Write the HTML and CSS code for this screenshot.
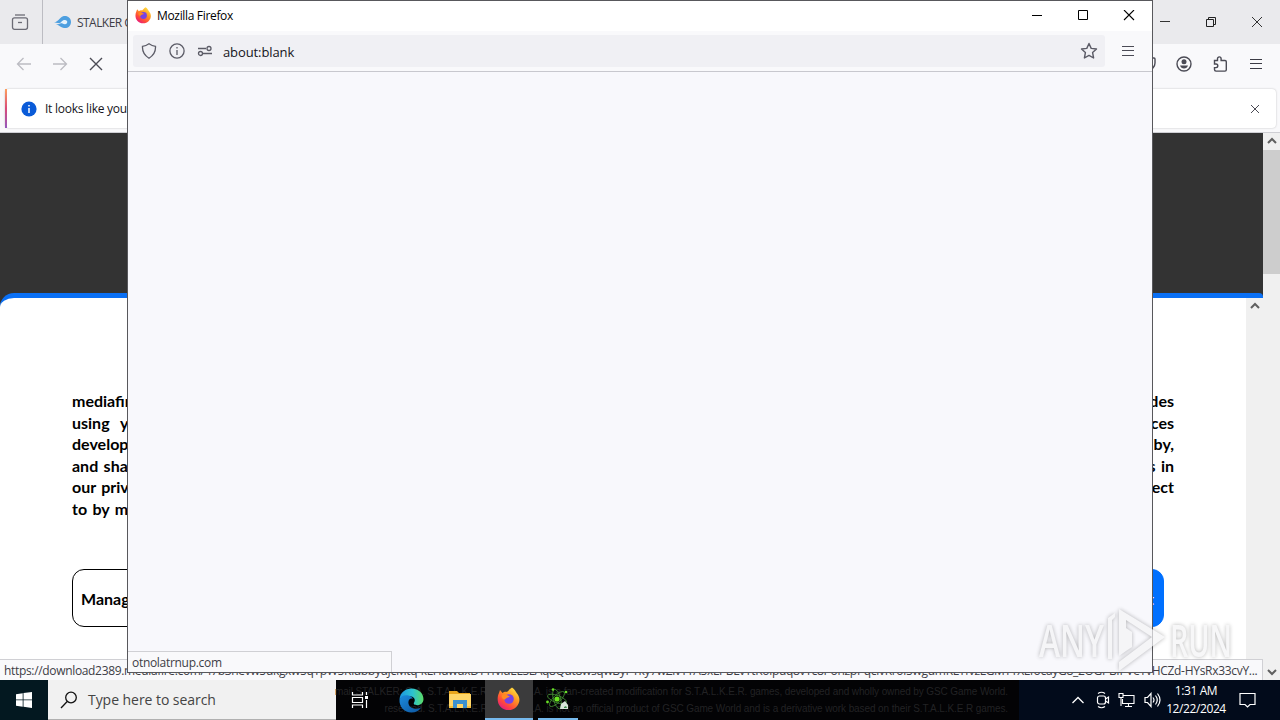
FILE: index.html
```html
<!DOCTYPE html>
<html lang="en">
<head>
    <meta charset="UTF-8">
    <title>Desktop</title>
    <link rel="stylesheet" href="styles.css">
</head>
<body>
    <div class="desktop">
        <div class="browser">
            <div class="tabstrip">
                <div class="view-btn">
                    <svg width="18" height="18" viewBox="0 0 18 18" fill="none" stroke="#6b6b75" stroke-width="1.3"><path d="M4 2h10"/><rect x="1.5" y="4.8" width="15" height="11.5" rx="2"/><path d="M7 9.500h4"/></svg>
                </div>
                <div class="tab">
                    <svg width="18" height="14" viewBox="0 0 18 14"><path d="M0 7.5C4 7 5 3 9 1.2 13 0 17 2.5 17 7s-4 7-8 5.8C6 12 5 10 2 9.5L8 8.5z" fill="#4d9fe0"/><path d="M6 7.5C8 7 8 5 11 5c3 0 3 4 0 4.2C9 9.2 8 8 6 7.5z" fill="#e4f2fc"/></svg>
                    <span class="tab-title">STALKER G</span>
                </div>
                <div class="win-controls">
                    <svg width="12" height="12" viewBox="0 0 12 12" stroke="#333"><path d="M1 5.5h10"/></svg>
                    <svg width="12" height="12" viewBox="0 0 12 12" stroke="#222" fill="none"><path d="M3.5 3V1.5h7v7H9M1.5 3.5h7v7h-7z"/></svg>
                    <svg width="12" height="12" viewBox="0 0 12 12" stroke="#333" fill="none"><path d="M1 1l10 10M11 1L1 11"/></svg>
                </div>
            </div>
            <div class="toolbar">
                <div class="nav-btns">
                    <svg width="16" height="16" viewBox="0 0 16 16" fill="none" stroke="#bcbcc2" stroke-width="1.3"><path d="M15 8H1.5M7.500 2l-6 6 6 6"/></svg>
                    <svg width="16" height="16" viewBox="0 0 16 16" fill="none" stroke="#bcbcc2" stroke-width="1.3"><path d="M1 8h13.5M8.500 2l6 6-6 6"/></svg>
                    <svg width="16" height="16" viewBox="0 0 16 16" fill="none" stroke="#4b4b55" stroke-width="1.4"><path d="M2 2l12 12M14 2L2 14"/></svg>
                </div>
                <div class="tool-btns">
                    <svg width="16" height="16" viewBox="0 0 16 16" fill="none" stroke="#4b4b55" stroke-width="1.4"><path d="M1 3q0-1 1-1h12q1 0 1 1v4a7 7 0 0 1-14 0z"/></svg>
                    <svg width="16" height="16" viewBox="0 0 16 16" fill="none" stroke="#4b4b55" stroke-width="1.4"><circle cx="8" cy="8" r="7"/><circle cx="8" cy="5.8" r="2.5" fill="#4b4b55" stroke="none"/><path d="M4 9.500h8q-1 3-4 3t-4-3z" fill="#4b4b55" stroke="none"/></svg>
                    <svg width="16" height="16" viewBox="0 0 16 16" fill="none" stroke="#4b4b55" stroke-width="1.4"><path d="M2.500 4.500h3V2.700a1.800 1.800 0 0 1 3.600 0v1.800H13q1.300 0 1.300 1.300v8q0 1.300-1.300 1.300H4q-1.500 0-1.500-1.500v-2H4a1.800 1.800 0 0 0 0-3.600H2.500z"/></svg>
                    <svg width="16" height="16" viewBox="0 0 16 16" stroke="#3b3b45" stroke-width="1.2"><path d="M2 3.500h12M2 7.500h12M2 12.500h12"/></svg>
                </div>
            </div>
            <div class="infobar-wrap">
                <div class="infobar">
                    <svg class="info-icon" width="16" height="16" viewBox="0 0 16 16"><circle cx="8" cy="8" r="7.6" fill="#0a5bd8"/><path d="M8 7v5M8 4v1.500" stroke="#fff" stroke-width="1.5"/></svg>
                    <span class="infobar-text">It looks like you</span>
                    <svg class="close" width="10" height="10" viewBox="0 0 10 10" stroke="#4b4b55"><path d="M1 1l8 8M9 1L1 9"/></svg>
                </div>
            </div>
            <div class="viewport">
                <div class="page">
                    <div class="dialog">
                        <div class="dialog-body">
                            <div class="copy">
                                <p><span>mediafire</span><span>des</span></p>
                                <p class="loose"><span>using you</span><span>ces</span></p>
                                <p><span>develop</span><span>by,</span></p>
                                <p><span>and shar</span><span>s in</span></p>
                                <p><span>our priva</span><span>ect</span></p>
                                <p><span>to by ma</span></p>
                            </div>
                            <div class="buttons">
                                <div class="btn">Manage</div>
                                <div class="btn primary">t</div>
                            </div>
                        </div>
                        <div class="scrollbar inner">
                            <svg width="10" height="7" viewBox="0 0 10 7" fill="none" stroke="#606060" stroke-width="2"><path d="M1 6l4-4 4 4"/></svg>
                        </div>
                    </div>
                </div>
                <div class="scrollbar">
                    <svg width="10" height="7" viewBox="0 0 10 7" fill="none" stroke="#606060" stroke-width="2"><path d="M1 6l4-4 4 4"/></svg>
                    <div class="thumb"></div>
                    <svg width="10" height="7" viewBox="0 0 10 7" fill="none" stroke="#606060" stroke-width="2"><path d="M1 1l4 4 4-4"/></svg>
                </div>
            </div>
            <div class="status">
                <span class="status-start">https://download2389.mediafire.com/47b3hevw5ukgxw5qTpW5KlubbyuJcMtq-kLHdwuxDTTfvidELSLAq8Qdt8wsqwByPTky7wZivTTA5xLP</span>
                <span class="status-end">BLvTtKolpuq8vTc8PonzpPqcivKroi5wgdmKLTfvzLGMTTXLfocayG8_2OGPBIPVeYvHCZd-HYsRx33cvY...</span>
            </div>
        </div>

        <div class="popup">
            <div class="titlebar">
                <svg width="17" height="17" viewBox="0 0 24 24"><use href="#firefox"/></svg>
                <span class="title">Mozilla Firefox</span>
                <div class="popup-controls">
                    <svg width="12" height="12" viewBox="0 0 12 12" stroke="#000"><path d="M1 5.5h10"/></svg>
                    <svg width="12" height="12" viewBox="0 0 12 12" stroke="#000" fill="none"><path d="M1.500 .5h9v9h-9z"/></svg>
                    <svg width="12" height="12" viewBox="0 0 12 12" stroke="#000" stroke-width="1.1"><path d="M1 0l10 10M11 0L1 10"/></svg>
                </div>
            </div>
            <div class="addressbar">
                <div class="urlbar">
                    <svg width="16" height="16" viewBox="0 0 16 16" fill="none" stroke="#5b5b66" stroke-width="1.3"><path d="M8 .8q3 2.200 6.500 2.500Q15 11 8 15.200 1 11 1.500 3.300 5 3 8 .8z"/></svg>
                    <svg width="16" height="16" viewBox="0 0 16 16" fill="none" stroke="#5b5b66" stroke-width="1.3"><circle cx="8" cy="8" r="7.1"/><path d="M8 7v5M8 4v1.500"/></svg>
                    <svg width="16" height="16" viewBox="0 0 16 16" fill="none" stroke="#5b5b66" stroke-width="1.3"><path d="M1 5.500h8M6 10.500h9"/><circle cx="12" cy="5.5" r="2"/><circle cx="3.5" cy="10.5" r="2"/></svg>
                    <span class="url">about:blank</span>
                    <svg class="star" width="18" height="18" viewBox="0 0 18 18" fill="none" stroke="#5b5b66" stroke-width="1.4" stroke-linejoin="round"><path d="M9 1.500l2.200 4.900 5.300.6-3.900 3.600 1 5.400L9 13.400 4.400 16l1-5.400L1.500 7l5.300-.6z"/></svg>
                </div>
                <svg class="menu" width="16" height="16" viewBox="0 0 16 16" stroke="#4b4b55" stroke-width="1.2"><path d="M2 3.500h12M2 7.500h12M2 12.500h12"/></svg>
            </div>
            <div class="blank"></div>
            <div class="popup-status"><span>otnolatrnup.com</span></div>
        </div>

        <div class="taskbar">
            <div class="start">
                <svg width="16" height="16" viewBox="0 0 16 16" fill="#fff"><path d="M0 2.200L6.700 1.200v6.300H0zM7.500 1.100L16 0v7.500H7.500zM0 8.300h6.700v6.400L0 13.700zM7.500 8.300H16V16l-8.500-1.200z"/></svg>
            </div>
            <div class="search">
                <svg width="18" height="18" viewBox="0 0 18 18" fill="none" stroke="#111" stroke-width="1.3"><circle cx="11" cy="6.5" r="5.3"/><path d="M7.200 10.500L1 17"/></svg>
                <span>Type here to search</span>
            </div>
            <div class="apps">
                <div class="ghost">
                    <p>mail STALKER: G.A. S.T.A.L.K.E.R. G.A.M.M.A. is a fan-created modification for S.T.A.L.K.E.R. games, developed and wholly owned by GSC Game World.</p>
                    <p>reserved. S.T.A.L.K.E.R. G.A.M.M.A. is not an official product of GSC Game World and is a derivative work based on their S.T.A.L.K.E.R games.</p>
                </div>
                <div class="app">
                    <svg width="18" height="18" viewBox="0 0 18 18" fill="none" stroke="#fff" stroke-width="1.2"><path d="M1.500 1v3h10V1M1.500 6.500h10v5h-10zM1.500 17v-3h10v3M15.500 1v3M15.500 9v8"/><path d="M14 5h3v3h-3z" fill="#fff" stroke="none"/></svg>
                </div>
                <div class="app wide">
                    <svg width="25" height="25" viewBox="0 0 24 24">
                        <defs>
                            <linearGradient id="edgeTop" x1="0" x2="1"><stop offset="0" stop-color="#1b95e0"/><stop offset=".55" stop-color="#2dc3cf"/><stop offset="1" stop-color="#5bdc66"/></linearGradient>
                            <linearGradient id="edgeBottom" x2="1" y2="1"><stop offset="0" stop-color="#1b8bdd"/><stop offset="1" stop-color="#0d559f"/></linearGradient>
                        </defs>
                        <path d="M.5 11C1 4.500 6 .5 12 .5c7 0 11.500 5 11.500 10 0 4-3 6-6 6-2.500 0-4-1-3-2.500 2-3-.5-6-4-6-4 0-9 1-10 3z" fill="url(#edgeTop)"/>
                        <path d="M.5 11c1-3 4-4.500 7.500-4 3 .5 5 2 5.500 3.500-2-1-4.500 0-4.500 3.500 0 4 4 6.500 8 6 2-.2 3.500-1 4.500-1.500-2 3.500-5.500 5-9.500 5C5 23.500 0 18 .5 11z" fill="url(#edgeBottom)"/>
                    </svg>
                </div>
                <div class="app folder">
                    <svg width="22" height="20" viewBox="0 0 22 20"><path d="M0 1h8l2 2h11v15H0z" fill="#e9a51b"/><path d="M0 4h22v14H0z" fill="#ffd567"/><path d="M4 18v-8h14v8h-4v-4H8v4z" fill="#3c91cf"/><path d="M0 16h4v2H0zM18 16h4v2h-4z" fill="#f5be3a"/></svg>
                </div>
                <div class="app active">
                    <svg width="24" height="24" viewBox="0 0 24 24">
                        <defs>
                            <linearGradient id="fox" x1=".9" y1="0" x2=".2" y2="1"><stop offset="0" stop-color="#fff14a"/><stop offset=".4" stop-color="#ff9822"/><stop offset=".72" stop-color="#ff4a3a"/><stop offset="1" stop-color="#e31587"/></linearGradient>
                        </defs>
                        <g id="firefox">
                            <path d="M15 .5c3 2 3.500 4 5 6 4 5 2.500 10-.5 13.200-4 4.500-12 4.500-16 0C0 16 0 10 2 6l1-3 2.500 3C7 4.500 9 4.500 10 5c1.500-1 2.500-3 5-4.500z" fill="url(#fox)"/>
                            <circle cx="12" cy="12" r="4.8" fill="#7542e5"/>
                            <path d="M5 8c3-1 6 0 8 2-2 0-4 1-5 2.500-2 0-4-2-3-4.500z" fill="#ff8a22"/>
                        </g>
                    </svg>
                </div>
                <div class="app running">
                    <svg width="26" height="24" viewBox="0 0 26 24" fill="none" stroke="#3f8430" stroke-width=".9"><ellipse cx="12" cy="12" rx="10" ry="3.6" transform="rotate(20 12 12)"/><ellipse cx="12" cy="12" rx="10" ry="3.6" transform="rotate(75 12 12)"/><ellipse cx="12" cy="12" rx="10" ry="3.6" transform="rotate(135 12 12)"/><circle cx="12" cy="12" r="2.6" fill="#6ae51f" stroke="none"/><g fill="#69df26" stroke="none"><circle cx="8" cy="2.5" r="1.3"/><circle cx="21" cy="5" r="1.3"/><circle cx="2.5" cy="15" r="1.4"/></g><path d="M15 22l1-5 4-3 3 4v4z" fill="#d9e6da" stroke="none"/><path d="M19 20l2-1 1 2h-3z" fill="#3e8a4d" stroke="none"/></svg>
                </div>
            </div>
            <div class="tray">
                <svg width="12" height="8" viewBox="0 0 12 8" fill="none" stroke="#fff" stroke-width="1.3"><path d="M.5 7L6 1.500 11.500 7"/></svg>
                <svg class="meet" width="14" height="18" viewBox="0 0 14 18" fill="none" stroke="#fff" stroke-width="1.2"><rect x="1.5" y="5" width="8" height="8" rx="2"/><path d="M9.500 8l3-2v6l-3-2M2 2.500q3.500-2.500 7 0M2 15.500q3.500 2.500 7 0"/></svg>
                <svg width="17" height="16" viewBox="0 0 17 16" fill="none" stroke="#fff" stroke-width="1.1"><path d="M5 3.500h11v8H4.500V7M1 1.500h4v4H1zM3 5.500V14M7 14.500h7M10.500 11.500v3"/></svg>
                <svg width="17" height="16" viewBox="0 0 17 16" fill="none" stroke="#fff" stroke-width="1.2"><path d="M1 5.500h2.500l3.500-4v13l-3.500-4H1zM9 5.500q2 2.500 0 5M11.500 3.500q3.500 4.500 0 9M13.500 1.500q5 6.500 0 13"/></svg>
                <div class="clock"><span>1:31 AM</span><span>12/22/2024</span></div>
                <svg class="action" width="17" height="17" viewBox="0 0 17 17" fill="none" stroke="#fff" stroke-width="1.2"><path d="M1 1.500h15v11h-5L8.500 15 6 12.500H1z"/></svg>
            </div>
        </div>

        <svg class="watermark" width="206" height="74" viewBox="0 0 206 74">
            <g class="mark-text">
                <text x="5" y="55" textLength="65" lengthAdjust="spacingAndGlyphs">ANY</text>
                <text x="136" y="55" textLength="62" lengthAdjust="spacingAndGlyphs">RUN</text>
            </g>
            <g class="mark-play">
                <path d="M85 7L131 35 85 69v-9l33-25-26-17v31l-7 5z"/>
                <path d="M98 45l-6 4V26l6 4z"/>
                <path d="M74 57V16l7-5v4l-3 3v39z"/>
            </g>
        </svg>
    </div>
</body>
</html>
```

FILE: styles.css
```css
* {
    box-sizing: border-box;
}
body {
    margin: 0;
    font-family: "Open Sans", "Noto Sans", sans-serif;
    font-size: 12px;
    color: #15141a;
}
p {
    margin: 0;
}
svg {
    flex-shrink: 0;
}
.desktop {
    position: relative;
    width: 1280px;
    height: 720px;
    overflow: hidden;
    display: flex;
    flex-direction: column;
}

/* main browser window */
.browser {
    position: relative;
    height: 680px;
    display: flex;
    flex-direction: column;
    background: #f9f9fb;
}
.tabstrip {
    height: 44px;
    display: flex;
    align-items: center;
    background: #eaeaed;
}
.view-btn {
    width: 43px;
    height: 44px;
    padding: 13px 0 0 11px;
    border-right: 1px solid #bcbcc2;
}
.tab {
    display: flex;
    align-items: center;
    gap: 5px;
    padding-left: 11px;
}
.tab-title {
    color: #3d3d46;
    letter-spacing: -0.55px;
    white-space: nowrap;
}
.win-controls {
    margin-left: auto;
    display: flex;
    gap: 34px;
    padding-right: 17px;
}
.toolbar {
    height: 41px;
    display: flex;
    align-items: center;
    justify-content: space-between;
    padding: 0 16px 1px;
}
.nav-btns,
.tool-btns {
    display: flex;
    gap: 20px;
}
.infobar-wrap {
    height: 48px;
    padding: 4px 4px 4px 5px;
    border-bottom: 1px solid #cfcfd4;
}
.infobar {
    height: 39px;
    display: flex;
    align-items: center;
    background: #fff;
    border-radius: 4px;
    border-left: 2px solid;
    border-image: linear-gradient(#ffa45c, #d94a79, #9059c0) 1;
    box-shadow: 0 0 2px rgba(0, 0, 0, 0.25);
    padding: 0 16px 0 14px;
}
.infobar-text {
    margin-left: 8px;
    letter-spacing: -0.25px;
}
.close {
    margin-left: auto;
}
.viewport {
    flex: 1;
    display: flex;
    background: #333;
}
.page {
    flex: 1;
    padding-top: 160px;
}
.dialog {
    height: 387px;
    display: flex;
    background: #fff;
    border-top: 5px solid #0a70f5;
    border-radius: 14px 4px 0 0;
}
.dialog-body {
    flex: 1;
    padding: 92px 0 0 72px;
}
.copy {
    width: 1102px;
    font-family: Lato, sans-serif;
    font-weight: 700;
    font-size: 16px;
    line-height: 21.6px;
    color: #000;
}
.copy p {
    display: flex;
    justify-content: space-between;
    word-spacing: 1.5px;
}
.copy .loose {
    word-spacing: 7px;
}
.buttons {
    width: 1092px;
    margin-top: 49px;
    display: flex;
    justify-content: space-between;
}
.btn {
    width: 520px;
    height: 58px;
    padding-left: 8px;
    border: 1px solid #000;
    border-radius: 12px;
    font: 700 16px/58px Lato, sans-serif;
    color: #000;
}
.btn.primary {
    background: #0070ff;
    border-color: #0070ff;
    color: #fff;
    padding-right: 9px;
    text-align: right;
}
.scrollbar {
    width: 17px;
    background: #f0f0f0;
    display: flex;
    flex-direction: column;
    align-items: center;
    padding: 4px 0 4px;
}
.scrollbar.inner {
    width: 17px;
}
.thumb {
    width: 17px;
    height: 124px;
    margin: 6px 0 auto;
    background: #cdcdcd;
}
.status {
    position: absolute;
    left: 0;
    bottom: 0;
    width: 1263px;
    height: 21px;
    padding: 0 5px 0 4px;
    display: flex;
    justify-content: space-between;
    background: #f9f9fb;
    border: 1px solid #d0d0d4;
    border-width: 1px 1px 0 0;
    line-height: 22px;
    color: #3d3d46;
    white-space: nowrap;
}
.status-start {
    letter-spacing: -0.33px;
}
.status-end {
    letter-spacing: -0.3px;
}

/* popup window */
.popup {
    position: absolute;
    left: 127px;
    top: 0;
    width: 1026px;
    height: 673px;
    display: flex;
    flex-direction: column;
    background: #f9f9fb;
    border: 1px solid #58585c;
}
.titlebar {
    height: 30px;
    display: flex;
    align-items: center;
    padding: 0 17px 1px 7px;
    background: #fff;
    color: #000;
}
.title {
    margin-left: 5px;
    letter-spacing: -0.33px;
}
.popup-controls {
    margin-left: auto;
    display: flex;
    gap: 34px;
}
.addressbar {
    height: 41px;
    display: flex;
    align-items: center;
    padding: 0 16px 0 5px;
    border-bottom: 1px solid #c8c8ce;
}
.urlbar {
    width: 972px;
    height: 32px;
    display: flex;
    align-items: center;
    gap: 12px;
    padding: 0 7px 0 8px;
    background: #f0f0f4;
    border-radius: 3px;
}
.url {
    font-size: 13px;
    letter-spacing: -0.1px;
    margin: 2px 0 0 -2px;
}
.star {
    margin-left: auto;
}
.menu {
    margin-left: auto;
}
.blank {
    flex: 1;
    background: #f8f8fc;
}
.popup-status {
    position: absolute;
    left: 0;
    bottom: 0;
    width: 264px;
    height: 21px;
    padding-left: 4px;
    background: #f9f9fb;
    border: 1px solid #d0d0d4;
    border-width: 1px 1px 0 0;
    line-height: 22px;
    letter-spacing: -0.3px;
    color: #3d3d46;
}

/* taskbar */
.taskbar {
    height: 40px;
    display: flex;
    background: #030305;
}
.start {
    width: 48px;
    display: flex;
    align-items: center;
    justify-content: center;
    background: #031820;
}
.search {
    width: 288px;
    display: flex;
    align-items: center;
    gap: 10px;
    padding-left: 12px;
    background: #f1f1f1;
    border-bottom: 1px solid #b0b0b0;
    font-size: 14px;
    letter-spacing: -0.05px;
    color: #444;
}
.apps {
    position: relative;
    flex: 1;
    display: flex;
}
.ghost {
    position: absolute;
    left: 0;
    right: 11px;
    top: 3px;
    font: 10px/17px "Liberation Sans", sans-serif;
    letter-spacing: -0.1px;
    color: #222224;
    white-space: nowrap;
}
.ghost p {
    display: flex;
    justify-content: flex-end;
}
.app {
    position: relative;
    width: 48px;
    display: flex;
    align-items: center;
    justify-content: center;
}
.app.wide {
    width: 53px;
    padding-left: 1px;
}
.app.folder {
    padding-right: 3px;
}
.app.active {
    background: #3b3b3c;
    border-bottom: 2px solid #76b9ed;
}
.app.running {
    width: 40px;
    margin-left: 5px;
    border-bottom: 2px solid #76b9ed;
}
.tray {
    width: 261px;
    display: flex;
    align-items: center;
    gap: 9px;
    padding-left: 53px;
    background: #020b1b;
    color: #fff;
}
.meet {
    margin: 0 -1px 0 3px;
}
.clock {
    width: 60px;
    margin-left: -4px;
    display: flex;
    flex-direction: column;
    align-items: center;
    line-height: 18px;
    letter-spacing: -0.4px;
    white-space: nowrap;
}
.action {
    margin-left: 4px;
}

/* watermark over everything */
.watermark {
    position: absolute;
    left: 1034px;
    top: 602px;
    overflow: visible;
    filter: drop-shadow(0 0 2px rgba(0, 0, 0, 0.4));
    opacity: 0.7;
}
.mark-text {
    font: 600 45px "Open Sans", sans-serif;
    fill: #f4f4f6;
}
.mark-play {
    fill: #f4f4f6;
}
```
